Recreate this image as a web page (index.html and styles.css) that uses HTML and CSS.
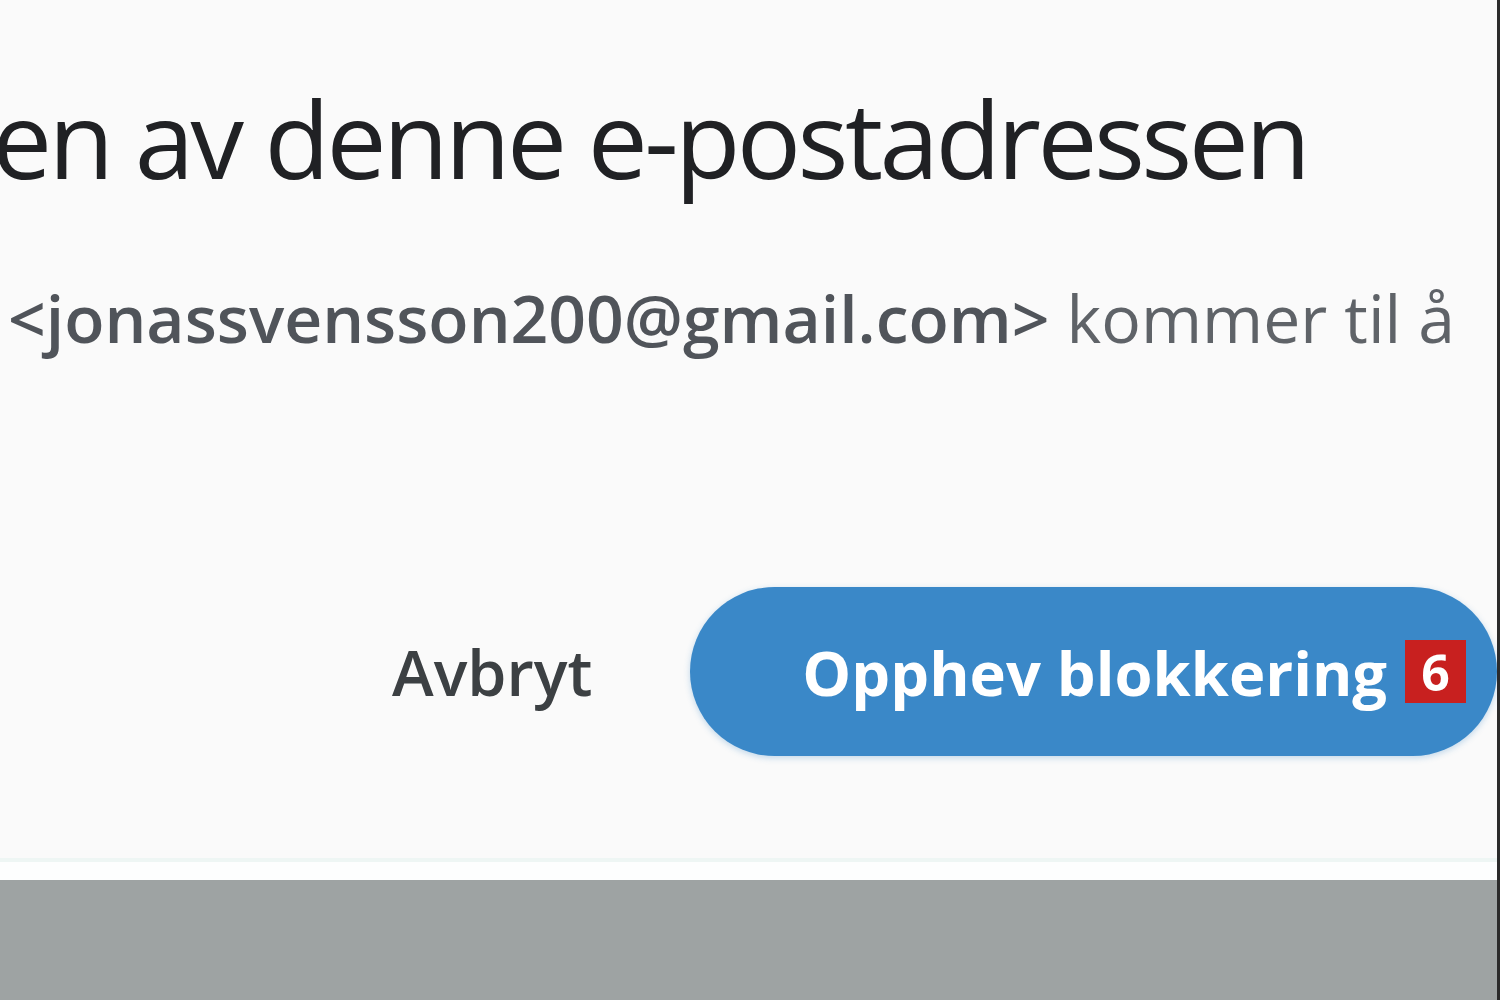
FILE: index.html
```html
<!DOCTYPE html>
<html lang="no">
<head>
<meta charset="utf-8">
<title>Opphev blokkering</title>
<link rel="stylesheet" href="styles.css">
</head>
<body>
<div class="frame">
  <div class="dialog">
    <h1 class="title">en av denne e-postadressen</h1>
    <p class="body-text"><b class="addr">&lt;jonassvensson200@gmail.com&gt;</b> kommer til å</p>
    <div class="actions">
      <button class="btn-text">Avbryt</button>
      <button class="btn-primary">Opphev blokkering <span class="badge">6</span></button>
    </div>
  </div>
  <div class="backdrop"></div>
</div>
</body>
</html>
```
FILE: styles.css
```css
html, body {
  margin: 0;
  padding: 0;
  width: 1500px;
  height: 1000px;
  overflow: hidden;
  background: #9ea3a3;
  font-family: "Open Sans", "Roboto", sans-serif;
}
.frame {
  width: 1500px;
  height: 1000px;
  box-sizing: border-box;
  border-right: 3px solid #2b2b2b;
  display: flex;
  flex-direction: column;
}
.dialog {
  height: 880px;
  flex: none;
  background: linear-gradient(#fafafa 0 858px, #eef6f4 858px 862px, #fdfefe 862px);
  overflow: hidden;
  display: flex;
  flex-direction: column;
}
.backdrop {
  flex: 1;
  background: #9ea3a3;
}
.title {
  margin: 70px 0 0 -8px;
  font-weight: 400;
  font-size: 107px;
  line-height: 136px;
  color: #202124;
  white-space: nowrap;
  letter-spacing: -3.6px;
}
.body-text {
  margin: 68px 0 0 8px;
  font-size: 66px;
  line-height: 86px;
  color: #5f6368;
  white-space: nowrap;
}
.addr {
  font-weight: 600;
  color: #50545a;
}
.kom {
  letter-spacing: -0.5px;
}
.actions {
  margin-top: 227px;
  display: flex;
  align-items: center;
  gap: 98px;
  padding-left: 392px;
}
.btn-text {
  border: 0;
  background: none;
  padding: 0;
  font-family: inherit;
  font-size: 63px;
  font-weight: 600;
  color: #3c4043;
}
.btn-primary {
  border: 0;
  height: 169px;
  width: 820px;
  border-radius: 85px;
  background: #3a88c8;
  color: #ffffff;
  font-family: inherit;
  font-size: 61.5px;
  font-weight: 700;
  padding: 0 0 0 112px;
  display: flex;
  align-items: center;
  gap: 18px;
  box-shadow: 0 2px 6px rgba(58,136,200,0.3);
}
.badge {
  background: #c8201f;
  color: #fff;
  width: 61px;
  height: 63px;
  display: flex;
  align-items: center;
  justify-content: center;
  font-size: 50px;
  font-weight: 700;
}
```
